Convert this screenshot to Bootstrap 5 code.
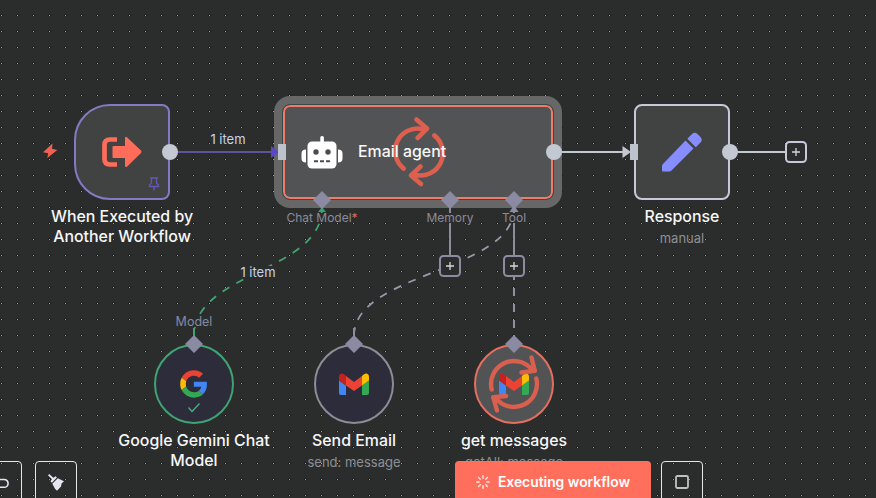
<!DOCTYPE html>
<html lang="en">
<head>
<meta charset="utf-8">
<meta name="viewport" content="width=device-width, initial-scale=1">
<title>Workflow</title>
<link href="https://cdn.jsdelivr.net/npm/bootstrap@5.3.0/dist/css/bootstrap.min.css" rel="stylesheet">
<style>
body{background:#2b2d2d;font-family:Inter,"Liberation Sans",sans-serif;color:#f6f7f8}
.canvas{height:100vh;background-image:radial-gradient(circle at 1.5px 15.5px,#a3a6a6 0,#a3a6a6 .55px,#1b1d1d .9px,#1b1d1d 1.2px,transparent 1.5px);background-size:16px 16px}
.wires{left:0;top:0;width:876px;height:498px;overflow:visible}
.node{position:absolute;width:96px;height:96px;top:104px;background:#414342;border:2px solid #c6cad8;border-radius:8px}
.node-trigger{left:74px;border-color:#8679c4;border-radius:36px 8px 8px 36px}
.node-agent{left:282px;width:272px;background:#525355;border:1px solid #38494b;box-shadow:0 0 0 8px #666766,inset 0 0 0 2px #f27a66}
.node-response{left:634px}
.node-round{top:344px;width:80px;height:80px;border-radius:50%;background:#2d2c3a;border-color:#8d8d98}
.node-model{left:154px;border-color:#3fa472}
.node-send{left:314px}
.node-get{left:474px;background:#525355;border-color:#e5705f}
.caption{position:absolute;width:192px;text-align:center;font-size:15.9px;line-height:20px;font-weight:500}
.subtitle{font-size:13px;line-height:16px;margin-top:3px;font-weight:400;color:#8d8f93}
.cap-trigger{left:26px;top:207px}
.cap-response{left:586px;top:207px}
.cap-model{left:98px;top:431px}
.cap-send{left:258px;top:431px}
.cap-get{left:418px;top:431px}
.port{position:absolute;width:100px;text-align:center;font-size:12px;line-height:10px;color:#8b8b99;white-space:nowrap}
.masked{display:inline-block;background:#2b2d2d}
.port-chat{left:272px;top:213px}
.port-memory{left:400px;top:213px}
.port-tool{left:464px;top:213px}
.port-model{left:144px;top:317px;font-size:12.5px;color:#8589a3}
.item-count{position:absolute;width:60px;text-align:center;font-size:13px;line-height:12px;color:#c4d4ee}
.items-main{left:198px;top:133px}
.items-model{left:228px;top:266px}
.req{color:#e0685c}
.agent-name{position:absolute;left:358px;top:140px;font-size:15.9px;line-height:24px;font-weight:500}
.toolbar{left:-20px;top:461px;width:723px;height:42px}
.tool-btn{width:42px;height:42px;border:1px solid #e5e6e6;border-radius:4px;padding:0;color:#e5e6ee;margin-right:13px;background:none}
.run-btn{width:196px;height:42px;background:#ff6f5c;color:#fff;border:0;border-radius:4px;font-size:13.85px;font-weight:600;padding:0;margin-right:10px}
</style>
<script src="https://cdn.jsdelivr.net/npm/bootstrap@5.3.0/dist/js/bootstrap.bundle.min.js"></script>
</head>
<body class="overflow-hidden">
<main class="canvas position-relative overflow-hidden">

  <svg class="wires position-absolute" viewBox="0 0 876 498" fill="none" stroke-width="2">
    <path d="M170 152H274" stroke="#5d52a0"/>
    <path d="M554 152H626M730 152H786" stroke="#c3c7d2"/>
    <path d="M322 208C322 272 194 272 194 336" stroke="#3fa472" stroke-width="1.8" stroke-dasharray="8 8"/>
    <path d="M194 328V342" stroke="#3fa472"/>
    <path d="M514 208C514 272 354 272 354 336" stroke="#9a9ba8" stroke-width="1.7" stroke-dasharray="8 8"/>
    <path d="M514 208V344" stroke="#9a9ba8" stroke-width="1.8" stroke-dasharray="8 8"/>
    <path d="M450 206V256M514 206V256M354 328V340M514 335V342" stroke="#8b8c9f"/>
  </svg>

  <section class="node node-trigger"></section>
  <section class="node node-agent"></section>
  <section class="node node-response"></section>
  <section class="node node-round node-model"></section>
  <section class="node node-round node-send"></section>
  <section class="node node-round node-get"></section>

  <div class="caption cap-trigger">When Executed by<br>Another Workflow</div>
  <div class="caption cap-response">Response<div class="subtitle">manual</div></div>
  <div class="caption cap-model">Google Gemini Chat<br>Model</div>
  <div class="caption cap-send">Send Email<div class="subtitle">send: message</div></div>
  <div class="caption cap-get">get messages<div class="subtitle">getAll: message</div></div>
  <div class="port port-chat"><span class="masked">Chat Model<span class="req">*</span></span></div>
  <div class="port port-memory"><span class="masked">Memory</span></div>
  <div class="port port-tool"><span class="masked">Tool</span></div>
  <div class="port port-model"><span class="masked">Model</span></div>
  <div class="item-count items-main">1 item</div>
  <div class="item-count items-model"><span class="masked">1 item</span></div>

  <svg class="wires position-absolute" viewBox="0 0 876 498" fill="none">
    <!-- connectors -->
    <path d="M271 146L279 152L271 158Z" fill="#5848c8"/>
    <path d="M622.5 146L631 152L622.5 158Z" fill="#c3c7d2"/>
    <path d="M278 144h8v16h-8zM630 144h8v16h-8z" fill="#bcc3cd"/>
    <g fill="#c3c9d3"><circle cx="170" cy="152" r="8"/><circle cx="554" cy="152" r="8"/><circle cx="730" cy="152" r="8"/></g>
    <path d="M318 212L322 207L326 212Z" fill="#2fa36b"/>
    <path d="M509.500 212L514 205L518.500 212Z" fill="#8b8c9f"/>
    <path fill="#8a8ba3" d="M322 191l9 9-9 9-9-9zM450 191l9 9-9 9-9-9zM514 191l9 9-9 9-9-9zM194 335l9 9-9 9-9-9zM354 335l9 9-9 9-9-9zM514 335l9 9-9 9-9-9z"/>
    <!-- add buttons -->
    <g fill="#2b2d2d" stroke-width="2">
      <rect x="786" y="142" width="20" height="20" rx="3.500" stroke="#c6cad8"/>
      <rect x="440" y="256" width="20" height="20" rx="3.500" stroke="#8b8c9f"/>
      <rect x="504" y="256" width="20" height="20" rx="3.500" stroke="#8b8c9f"/>
    </g>
    <path d="M792 152h8M796 148v8M446 266h8M450 262v8M510 266h8M514 262v8" stroke="#d5d6dc" stroke-width="1.300"/>
    <!-- trigger -->
    <path fill="#f0624f" d="M52.500 143.500L43 152.300L48.200 153.200L47.300 158L57.300 150L52 148.800Z"/>
    <path d="M117 139.500H110Q104.500 139.500 104.500 145V159Q104.500 164.500 110 164.500H117" stroke="#ff6d5a" stroke-width="4.700"/>
    <path fill="#ff6d5a" d="M112.500 147Q112.500 146 113.500 146H125V138.500Q125 135.800 127.200 137.500L141 150.500Q142 151.800 141 153L127.200 166.500Q125 168 125 165.500V158H113.500Q112.500 158 112.500 157Z"/>
    <path d="M150 178H158M151.500 178V183L149.500 185V186.500H158.500V185L156.500 183V178M154 186.500V190.500" stroke="#6558b5" stroke-width="1.300"/>
    <!-- robot -->
    <g fill="#fff"><rect x="307.500" y="141.500" width="29" height="27" rx="4.500"/><rect x="320.300" y="136" width="3.600" height="7" rx="1.600"/><path d="M306 149.500V162.500Q301.500 162.500 301.500 158.500V153.500Q301.500 149.500 306 149.500M338 149.500V162.500Q342.500 162.500 342.500 158.500V153.500Q342.500 149.500 338 149.500"/></g>
    <g fill="#4b4c50"><circle cx="316" cy="152" r="2.700"/><circle cx="328" cy="152" r="2.700"/><path d="M314 160.300h4v2h-4zM320 160.300h4v2h-4zM326 160.300h4v2h-4z"/></g>
    <!-- running indicator: agent -->
    <g transform="translate(.5 0)" stroke="#e8604e" stroke-opacity=".93" stroke-width="4.600" stroke-linecap="round" stroke-linejoin="round">
      <path d="M403.200 168.600A22.500 22.500 0 0 1 422 129L426.500 128.600M416 119.500L426.500 128.600L417 138"/>
      <path d="M433.800 135.400A22.500 22.500 0 0 1 415 175L410.500 175.400M420 166.500L410.500 175.400L420.500 184"/>
    </g>
    <!-- pencil -->
    <g fill="#878cff"><path d="M662.500 164.500L685.500 140.500L693.500 148.500L671.500 170.500Q670.500 171.500 669 171.500H663Q662 171.500 662 170.500V166Q662 165 662.500 164.500Z"/><path d="M687.300 138.700L692 134Q694.500 131.500 697.500 134L700.500 137Q703 140 700.500 142.500L695.800 147.200Z"/></g>
    <!-- Google logo -->
    <g transform="translate(180.200 370.300) scale(.57)">
      <path fill="#EA4335" d="M24 9.500c3.540 0 6.710 1.220 9.210 3.600l6.850-6.850C35.900 2.380 30.470 0 24 0 14.620 0 6.510 5.380 2.560 13.220l7.980 6.190C12.430 13.720 17.740 9.500 24 9.500z"/>
      <path fill="#4285F4" d="M46.980 24.550c0-1.570-.15-3.090-.38-4.550H24v9.020h12.940c-.58 2.960-2.260 5.480-4.780 7.180l7.730 6c4.510-4.180 7.090-10.360 7.090-17.650z"/>
      <path fill="#FBBC05" d="M10.530 28.590A14.500 14.500 0 0 1 9.770 24c0-1.600.27-3.140.76-4.590l-7.980-6.190A23.990 23.990 0 0 0 0 24c0 3.880.92 7.540 2.560 10.780l7.970-6.190z"/>
      <path fill="#34A853" d="M24 48c6.480 0 11.930-2.130 15.890-5.810l-7.730-6c-2.150 1.450-4.920 2.300-8.160 2.300-6.260 0-11.570-4.220-13.470-9.910l-7.980 6.190C6.510 42.620 14.620 48 24 48z"/>
    </g>
    <path d="M188.500 407.500L192 411.500L199.500 403.500" stroke="#4bb37f" stroke-width="1.200"/>
    <!-- Gmail logos -->
    <defs><g id="gmail">
      <path fill="#4285F4" d="M0 7.500L7 12.500V22H2Q0 22 0 20Z"/>
      <path fill="#34A853" d="M23 12.500L30 7.500V20Q30 22 28 22H23Z"/>
      <path fill="#FBBC04" d="M23 3L25 1.300C27.500 -.5 30 1 30 4V7.500L23 12.500Z"/>
      <path fill="#EA4335" d="M7 3L15 9L23 3V12.500L15 18L7 12.500Z"/>
      <path fill="#C5221F" d="M0 4C0 1 2.500 -.5 5 1.300L7 3V12.500L0 7.500Z"/>
    </g></defs>
    <use href="#gmail" x="339" y="373"/>
    <use href="#gmail" x="499" y="373"/>
    <!-- running indicator: get messages -->
    <g stroke="#e0604f" stroke-width="4.400" stroke-opacity=".95" stroke-linecap="round" stroke-linejoin="round">
      <path d="M491.700 389.500A23 23 0 0 1 531 368.500L534.800 370.800M531.500 357.500L534.800 370.800L521.500 372.500"/>
      <path d="M536.300 378.500A23 23 0 0 1 497 399.500L493.200 397.200M497 410.500L493.200 397.200L506 396"/>
    </g>
  </svg>
  <span class="agent-name">Email agent</span>

  <nav class="toolbar position-absolute d-flex">
    <button class="tool-btn d-flex align-items-center justify-content-center" aria-label="Undo"><svg width="18" height="18" viewBox="0 0 18 18" fill="none" stroke="currentColor" stroke-width="1.600"><path d="M2 6.500H12.200A3.900 3.900 0 0 1 12.200 14.300H8M5.500 3L2 6.500L5.500 10"/></svg></button>
    <button class="tool-btn d-flex align-items-center justify-content-center" aria-label="Tidy up"><svg width="18" height="18" viewBox="0 0 18 18" fill="currentColor"><path d="M1 2.300L2.300 1L6.300 4.800L8.600 3.200L9.900 4.500L4.900 9.700L3.500 8.300L4.900 6.300Z"/><path d="M10.800 5.200L17 8.200L14.600 10.600L14 13.400L10 17.800L8 15.800L5.300 10.800Z"/></svg></button>
    <button class="run-btn ms-auto d-flex align-items-center justify-content-center gap-2"><svg width="14" height="14" viewBox="0 0 14 14" stroke="#fff" stroke-width="1.400" stroke-linecap="round"><path d="M7 .8V3.200M7 10.800V13.200M.8 7H3.200M10.800 7H13.200M2.600 2.600L4.300 4.300M9.700 9.700L11.400 11.400M2.600 11.400L4.300 9.700M9.700 4.300L11.400 2.600" opacity=".85"/></svg><span>Executing workflow</span></button>
    <button class="tool-btn me-0 d-flex align-items-center justify-content-center" aria-label="Stop"><svg width="14" height="14" viewBox="0 0 14 14" fill="none" stroke="#bfc0c4" stroke-width="1.800"><rect x="1" y="1" width="12" height="12" rx="1.500"/></svg></button>
  </nav>
</main>
</body>
</html>
